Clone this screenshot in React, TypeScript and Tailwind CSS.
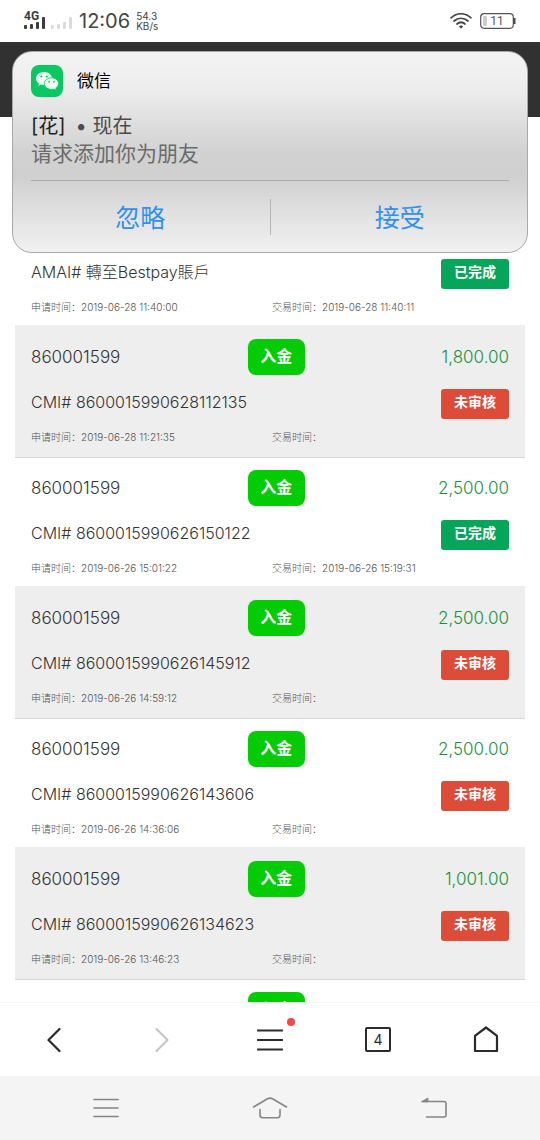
import React from "react";

type Status = "done" | "pending";

interface Transaction {
  id: string;
  account?: string;
  amount?: string;
  type?: string;
  reference?: string;
  status?: Status;
  appliedAt?: string;
  tradedAt?: string;
}

const transactions: Transaction[] = [
  { id: "t0", reference: "AMAI# 轉至Bestpay賬戶", status: "done", appliedAt: "2019-06-28 11:40:00", tradedAt: "2019-06-28 11:40:11" },
  { id: "t1", account: "860001599", type: "入金", amount: "1,800.00", reference: "CMI# 8600015990628112135", status: "pending", appliedAt: "2019-06-28 11:21:35" },
  { id: "t2", account: "860001599", type: "入金", amount: "2,500.00", reference: "CMI# 8600015990626150122", status: "done", appliedAt: "2019-06-26 15:01:22", tradedAt: "2019-06-26 15:19:31" },
  { id: "t3", account: "860001599", type: "入金", amount: "2,500.00", reference: "CMI# 8600015990626145912", status: "pending", appliedAt: "2019-06-26 14:59:12" },
  { id: "t4", account: "860001599", type: "入金", amount: "2,500.00", reference: "CMI# 8600015990626143606", status: "pending", appliedAt: "2019-06-26 14:36:06" },
  { id: "t5", account: "860001599", type: "入金", amount: "1,001.00", reference: "CMI# 8600015990626134623", status: "pending", appliedAt: "2019-06-26 13:46:23" },
  { id: "t6", type: "入金" },
];

function StatusBar() {
  return (
    <header className="flex h-[42px] shrink-0 items-center justify-between bg-white px-6 text-[#444]">
      <div className="flex items-center gap-1.5">
        <svg width="49" height="24" viewBox="0 0 49 24" aria-hidden="true">
          <g fill="#3c3c3c">
            <rect x="0" y="16" width="3" height="4" rx="1" />
            <rect x="6" y="15" width="3" height="5" rx="1" />
            <rect x="12" y="13" width="3" height="7" rx="1" />
            <rect x="18" y="8" width="3" height="12" rx="1" />
          </g>
          <g fill="#dcdcdc">
            <rect x="27" y="16" width="3" height="4" rx="1" />
            <rect x="33" y="15" width="3" height="5" rx="1" />
            <rect x="39" y="13" width="3" height="7" rx="1" />
            <rect x="45" y="8" width="3" height="12" rx="1" />
          </g>
          <text x="0" y="11" fontSize="12" fontWeight="700" fontFamily="Roboto, sans-serif" fill="#3c3c3c">4G</text>
        </svg>
        <span className="text-xl leading-6">12:06</span>
        <span className="flex flex-col text-[10px] leading-[10px]">
          <span>54.3</span>
          <span>KB/s</span>
        </span>
      </div>
      <div className="flex items-center gap-2">
        <svg width="22" height="16" viewBox="0 0 22 16" fill="none" stroke="#444" strokeWidth="1.7" strokeLinecap="round" aria-hidden="true">
          <path d="M1 4.800C7-.6 15-.6 21 4.800M4 8C8.200 4.300 13.800 4.300 18 8M7 11C9.500 8.800 12.500 8.800 15 11" />
          <path d="M8.800 13.200Q11 11.800 13.200 13.200L11 15.800Z" fill="#444" stroke="none" />
        </svg>
        <svg width="36" height="16" viewBox="0 0 36 16" aria-hidden="true">
          <rect x=".7" y=".7" width="32.600" height="14.600" rx="3.500" fill="none" stroke="#555" strokeWidth="1.200" />
          <rect x="3" y="3" width="4" height="10" rx="1" fill="#ccc" />
          <path d="M34.500 5v6" stroke="#444" strokeWidth="2" />
          <text x="17" y="12" textAnchor="middle" fontSize="12" fontFamily="Roboto, sans-serif" fill="#555">11</text>
        </svg>
      </div>
    </header>
  );
}

function WeChatIcon() {
  return (
    <svg width="32" height="32" viewBox="0 0 32 32" aria-hidden="true">
      <rect width="32" height="32" rx="8" fill="#08c961" />
      <path d="M13 7C8.500 7 5 9.800 5 13.500c0 2.100 1.100 3.900 2.900 5.100L7.200 21l2.900-1.500c.9.300 1.900.4 2.900.4 4.500 0 8-2.800 8-6.400S17.500 7 13 7Z" fill="#effff4" />
      <path d="M20.500 12.800c-4 0-7.200 2.500-7.200 5.800s3.200 5.800 7.200 5.800c.9 0 1.700-.1 2.500-.3l2.400 1.300-.6-2.100c1.700-1.100 2.800-2.800 2.800-4.700 0-3.300-3.200-5.800-7.100-5.800Z" fill="#effff4" stroke="#08c961" strokeWidth=".9" />
      <g fill="#08c961">
        <circle cx="10.300" cy="11.500" r="1.100" />
        <circle cx="15.800" cy="11.500" r="1.100" />
        <circle cx="18.200" cy="16.800" r=".9" />
        <circle cx="23" cy="16.800" r=".9" />
      </g>
    </svg>
  );
}

function Notification() {
  return (
    <section
      aria-label="微信"
      className="absolute inset-x-3 top-[9px] rounded-[20px] border border-[#a8a8a8] bg-[linear-gradient(to_bottom,#f3f3f3_0%,#ededed_18%,#d2d2d2_50%,#cfcfcf_62%,#dedede_78%,#f1f1f1_100%)] px-[18px] pt-3"
    >
      <div className="flex items-center gap-3.5">
        <WeChatIcon />
        <h2 className="text-[17px] leading-[34px] text-black">微信</h2>
      </div>
      <div className="pt-3.5 pb-3 leading-7">
        <p className="flex gap-2.5 text-xl leading-7 text-[#4b4b4b]">
          <span className="text-[#222]">[花]</span>
          <span>• 现在</span>
        </p>
        <p className="text-[21px] leading-7 text-[#6b6b6b]">请求添加你为朋友</p>
      </div>
      <div className="flex items-center border-t border-[#a9a9a9]">
        <button type="button" className="h-[71px] flex-1 pt-1 pr-5 text-[25px] text-[#3090ee]">忽略</button>
        <span className="h-9 w-px bg-[#b5b5b5]" />
        <button type="button" className="h-[71px] flex-1 pt-1 pl-5 text-[25px] text-[#3090ee]">接受</button>
      </div>
    </section>
  );
}

function StatusBadge({ status }: { status: Status }) {
  const color = status === "done" ? "bg-[#05a65a]" : "bg-[#dd4b39]";
  return (
    <span className={`h-[30px] w-[68px] rounded-[3px] text-center text-sm leading-[26px] font-bold text-white ${color}`}>
      {status === "done" ? "已完成" : "未审核"}
    </span>
  );
}

function TransactionRow({ item, shaded }: { item: Transaction; shaded: boolean }) {
  return (
    <li
      className={`px-4 ${shaded ? "border-b border-[#d6d6d6] bg-[#eee] pt-3.5 pb-2.5" : "bg-white pt-3 pb-2"}`}
    >
      <div className="grid h-9 grid-cols-[17fr_auto_16fr] items-center text-[17px]">
        <span className="pt-0.5">{item.account}</span>
        {item.type ? (
          <span className="h-9 w-[57px] rounded-lg bg-[#04cc04] text-center text-base leading-[34px] font-bold text-white">
            {item.type}
          </span>
        ) : (
          <span />
        )}
        <span className="pt-0.5 text-right text-[#16913c]">{item.amount}</span>
      </div>
      <div className="mt-3.5 flex h-[30px] justify-between">
        <span className="leading-[26px]">{item.reference}</span>
        {item.status && <StatusBadge status={item.status} />}
      </div>
      <div className="mt-2 grid h-5 grid-cols-2 text-[10px] leading-5 text-[#555]">
        {item.appliedAt && (
          <>
            <span>申请时间：{item.appliedAt}</span>
            <span className="pl-0.5">交易时间：{item.tradedAt}</span>
          </>
        )}
      </div>
    </li>
  );
}

function BrowserBar() {
  const button = "flex flex-1 items-center justify-center";
  return (
    <nav aria-label="浏览器" className="flex h-[74px] shrink-0 border-t border-[#f5f5f5] bg-white text-[#2d2a2b]">
      <button type="button" aria-label="后退" className={button}>
        <svg width="14" height="26" viewBox="0 0 14 26" fill="none" stroke="currentColor" strokeWidth="2.200" strokeLinecap="round" strokeLinejoin="round">
          <path d="M12.500 2 1.500 13l11 11" />
        </svg>
      </button>
      <button type="button" aria-label="前进" className={`${button} text-[#c4c4c4]`}>
        <svg width="14" height="26" viewBox="0 0 14 26" fill="none" stroke="currentColor" strokeWidth="2" strokeLinecap="round" strokeLinejoin="round">
          <path d="m1.500 2 11 11-11 11" />
        </svg>
      </button>
      <button type="button" aria-label="菜单" className={button}>
        <span className="relative">
          <svg width="26" height="24" viewBox="0 0 26 24" stroke="currentColor" strokeWidth="2.200" strokeLinecap="square">
            <path d="M1.200 2.500h23.600M1.200 12h23.600M1.200 21.500h23.600" />
          </svg>
          <span className="absolute -top-2.5 -right-3 size-2 rounded-full bg-[#f54848]" />
        </span>
      </button>
      <button type="button" aria-label="标签页" className={button}>
        <span className="h-[25px] w-[26px] rounded-[2px] border-2 border-current text-center text-sm leading-[21px]">4</span>
      </button>
      <button type="button" aria-label="主页" className={button}>
        <svg width="26" height="27" viewBox="0 0 26 27" fill="none" stroke="currentColor" strokeWidth="2.200" strokeLinejoin="round">
          <path d="M13 1.500 24 9.800V25H2V9.800Z" />
        </svg>
      </button>
    </nav>
  );
}

function SystemBar() {
  const button = "flex flex-1 items-center justify-center";
  return (
    <nav aria-label="系统" className="flex h-16 shrink-0 bg-[#f4f4f4] px-6 text-[#858585]">
      <button type="button" aria-label="最近任务" className={button}>
        <svg width="26" height="20" viewBox="0 0 26 20" stroke="currentColor" strokeWidth="1.700" strokeLinecap="round">
          <path d="M1 1.500h24M1 10h24M1 18.500h24" />
        </svg>
      </button>
      <button type="button" aria-label="桌面" className={button}>
        <svg width="36" height="22" viewBox="0 0 36 22" fill="none" stroke="currentColor" strokeWidth="1.600" strokeLinecap="round" strokeLinejoin="round">
          <path d="M1.500 10 15.500 1.800Q18 .5 20.500 1.800L34.500 10M8 12.500V18q0 2.800 2.800 2.800h14.400Q28 20.800 28 18v-5.500" />
        </svg>
      </button>
      <button type="button" aria-label="返回" className={button}>
        <svg width="26" height="22" viewBox="0 0 26 22" fill="none" stroke="currentColor" strokeWidth="1.600" strokeLinecap="round" strokeLinejoin="round">
          <path d="M1.500 4.500H23q2 0 2 2V18q0 2-2 2H5.500" />
          <path d="M.8 4.500 7 1v3.500Z" fill="currentColor" strokeWidth=".8" />
        </svg>
      </button>
    </nav>
  );
}

export default function App() {
  return (
    <div className="flex h-screen flex-col overflow-hidden bg-white font-[Inter,'Noto_Sans_CJK_SC',sans-serif]">
      <StatusBar />
      <main className="relative min-h-0 flex-1 overflow-hidden">
        <div className="h-[75px] bg-[#313131]" />
        <ul className="mx-[15px] pt-20 text-base font-light text-[#333]">
          {transactions.map((item, index) => (
            <TransactionRow key={item.id} item={item} shaded={index % 2 === 1} />
          ))}
        </ul>
        <Notification />
      </main>
      <BrowserBar />
      <SystemBar />
    </div>
  );
}
